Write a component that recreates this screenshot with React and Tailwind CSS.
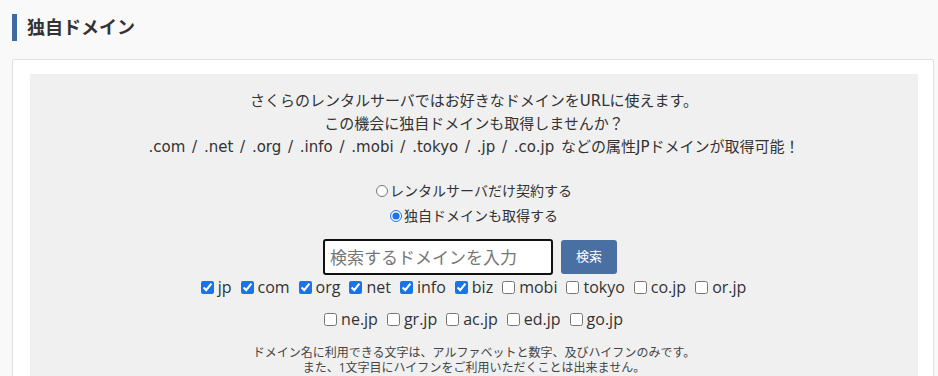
const TLDS_1 = [
  { name: "jp", checked: true },
  { name: "com", checked: true },
  { name: "org", checked: true },
  { name: "net", checked: true },
  { name: "info", checked: true },
  { name: "biz", checked: true },
  { name: "mobi", checked: false },
  { name: "tokyo", checked: false },
  { name: "co.jp", checked: false },
  { name: "or.jp", checked: false },
];

const TLDS_2 = [
  { name: "ne.jp", checked: false },
  { name: "gr.jp", checked: false },
  { name: "ac.jp", checked: false },
  { name: "ed.jp", checked: false },
  { name: "go.jp", checked: false },
];

function TldCheck({ name, checked }) {
  return (
    <label className="flex items-center mr-[9px]">
      <input
        type="checkbox"
        defaultChecked={checked}
        className="w-[13px] h-[13px] m-0 mr-[4px] accent-[#1a73e8]"
      />
      <span>{name}</span>
    </label>
  );
}

export default function App() {
  return (
    <div
      className="w-[938px] h-[376px] overflow-hidden bg-[#f9f9f9] text-[#333]"
      style={{ fontFamily: '"Open Sans", "Noto Sans CJK JP", sans-serif' }}
    >
      {/* Section heading */}
      <div className="flex items-center h-[26px] mt-[14px] ml-[12px]">
        <div className="w-[5px] h-[27px] bg-[#3e68a0]" />
        <h2 className="ml-[10px] text-[18px] font-bold text-[#333] leading-none">独自ドメイン</h2>
      </div>

      {/* Card */}
      <div className="mt-[19px] ml-[12px] w-[922px] bg-white border border-[#e0e0e0] rounded-[2px] shadow-[0_1px_2px_rgba(0,0,0,0.06)] pt-[14px] pl-[17px] pr-[15px]">
        <div className="bg-[#f0f0f0] pt-[16px] text-center">
          <div
            className="text-[15px] leading-[23px]"
            style={{ fontFamily: '"DejaVu Sans", "Noto Sans CJK JP", sans-serif' }}
          >
            <p>さくらのレンタルサーバではお好きなドメインをURLに使えます。</p>
            <p>この機会に独自ドメインも取得しませんか？</p>
            <p className="[word-spacing:2px]">
              .com / .net / .org / .info / .mobi / .tokyo / .jp / .co.jp などの属性JPドメインが取得可能！
            </p>
          </div>

          <div className="mt-[19px] flex flex-col items-center text-[14px] leading-[25px]">
            <label className="flex items-center">
              <input type="radio" name="domain" className="w-[12px] h-[12px] m-0 mr-[2px] accent-[#1a73e8]" />
              <span>レンタルサーバだけ契約する</span>
            </label>
            <label className="flex items-center">
              <input type="radio" name="domain" defaultChecked className="w-[12px] h-[12px] m-0 mr-[2px] accent-[#1a73e8]" />
              <span>独自ドメインも取得する</span>
            </label>
          </div>

          <div className="mt-[11px] flex justify-center items-center gap-[8px] pr-[8px]">
            <input
              type="text"
              placeholder="検索するドメインを入力"
              className="w-[230px] h-[36px] border-2 border-[#111] rounded-[3px] bg-white px-[5px] text-[17px] placeholder:text-[#777] outline-none"
            />
            <button className="w-[56px] h-[34px] bg-[#4a6fa3] text-white text-[13px] rounded-[3px]">検索</button>
          </div>

          <div className="mt-0 flex justify-center flex-wrap text-[16px] leading-[24px] pl-[8px]">
            {TLDS_1.map((t) => (
              <TldCheck key={t.name} {...t} />
            ))}
          </div>
          <div className="mt-[8px] flex justify-center flex-wrap text-[16px] leading-[24px] pl-[8px]">
            {TLDS_2.map((t) => (
              <TldCheck key={t.name} {...t} />
            ))}
          </div>

          <div className="mt-[14px] text-[12px] leading-[15px] text-[#444] pb-[10px]">
            <p>ドメイン名に利用できる文字は、アルファベットと数字、及びハイフンのみです。</p>
            <p>また、1文字目にハイフンをご利用いただくことは出来ません。</p>
          </div>
        </div>
      </div>
    </div>
  );
}
